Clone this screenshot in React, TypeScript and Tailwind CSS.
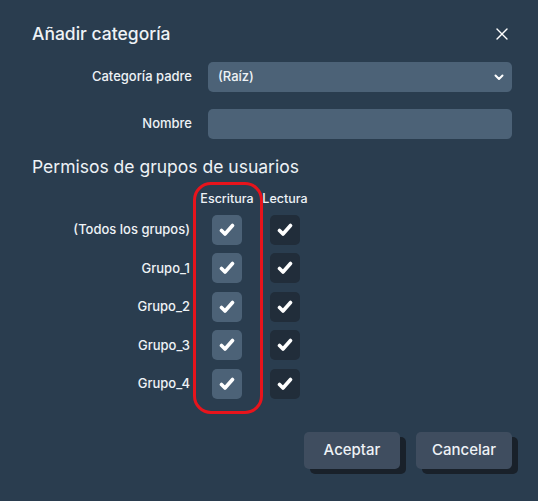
import { X } from "lucide-react";

const groups = ["(Todos los grupos)", "Grupo_1", "Grupo_2", "Grupo_3", "Grupo_4"];

function Check({ light }: { light: boolean }) {
  return (
    <div
      className={`flex h-[30px] w-[30px] items-center justify-center rounded-[5px] ${
        light ? "bg-[#4c6277]" : "bg-[#212d3a]"
      }`}
    >
      <svg width="16" height="14" viewBox="0 0 16 14" fill="none">
        <path
          d="M2.5 7.5L6 11L13.5 2.5"
          stroke="#ffffff"
          strokeWidth="3.6"
          strokeLinecap="round"
          strokeLinejoin="round"
        />
      </svg>
    </div>
  );
}

export default function App() {
  return (
    <div
      className="relative h-[501px] w-[538px] bg-[#2a3d4f] text-[#eef2f6]"
      style={{ fontFamily: "Inter, 'Noto Sans', sans-serif" }}
    >
      <div className="flex items-center justify-between pl-8 pr-[26px] pt-[22px]">
        <h2 className="text-[17.5px] leading-6 font-medium">Añadir categoría</h2>
        <X size={20} strokeWidth={1.6} className="text-white" />
      </div>

      <div className="mt-4 flex flex-col gap-[17px] pl-8 pr-[26px]">
        <div className="flex items-center">
          <label className="w-[160px] text-right text-[13px] font-medium">Categoría padre</label>
          <div className="ml-4 flex h-[30px] flex-1 items-center justify-between rounded-[5px] bg-[#4c6277] pl-[10px] pr-[8px]">
            <span className="text-[13px] font-medium">(Raíz)</span>
            <svg width="10" height="7" viewBox="0 0 10 7" fill="none">
              <path d="M1.5 1.5L5 5L8.5 1.5" stroke="#ffffff" strokeWidth="2" strokeLinecap="round" strokeLinejoin="round" />
            </svg>
          </div>
        </div>
        <div className="flex items-center">
          <label className="w-[160px] text-right text-[13px] font-medium">Nombre</label>
          <div className="ml-4 h-[30px] flex-1 rounded-[5px] bg-[#4c6277]" />
        </div>
      </div>

      <h3 className="mt-[16px] pl-8 text-[17.5px] leading-6 font-normal">Permisos de grupos de usuarios</h3>

      <div className="relative mt-[11px] pl-8">
        <div className="flex items-center">
          <div className="w-[166px]" />
          <div className="w-[58px] text-center text-[12.5px] font-medium">Escritura</div>
          <div className="w-[58px] text-center text-[12.5px] font-medium">Lectura</div>
        </div>
        <div className="mt-[6px] flex flex-col gap-[8.5px]">
          {groups.map((g) => (
            <div key={g} className="flex items-center">
              <div className="w-[166px] pr-2 text-right text-[13px] font-medium">{g}</div>
              <div className="flex w-[58px] justify-center">
                <Check light />
              </div>
              <div className="flex w-[58px] justify-center">
                <Check light={false} />
              </div>
            </div>
          ))}
        </div>
        <div className="pointer-events-none absolute left-[193px] top-[-8px] h-[232px] w-[70px] rounded-[18px] border-[3px] border-[#e8141c]" />
      </div>

      <div className="mt-[33px] flex justify-end gap-4 pr-[26px]">
        <button className="h-[37px] w-[96px] rounded-[5px] bg-[#3f4d5f] text-[15px] font-medium shadow-[6px_5px_0_#19212a]">
          Aceptar
        </button>
        <button className="h-[37px] w-[96px] rounded-[5px] bg-[#3f4d5f] text-[15px] font-medium shadow-[6px_5px_0_#19212a]">
          Cancelar
        </button>
      </div>
    </div>
  );
}
